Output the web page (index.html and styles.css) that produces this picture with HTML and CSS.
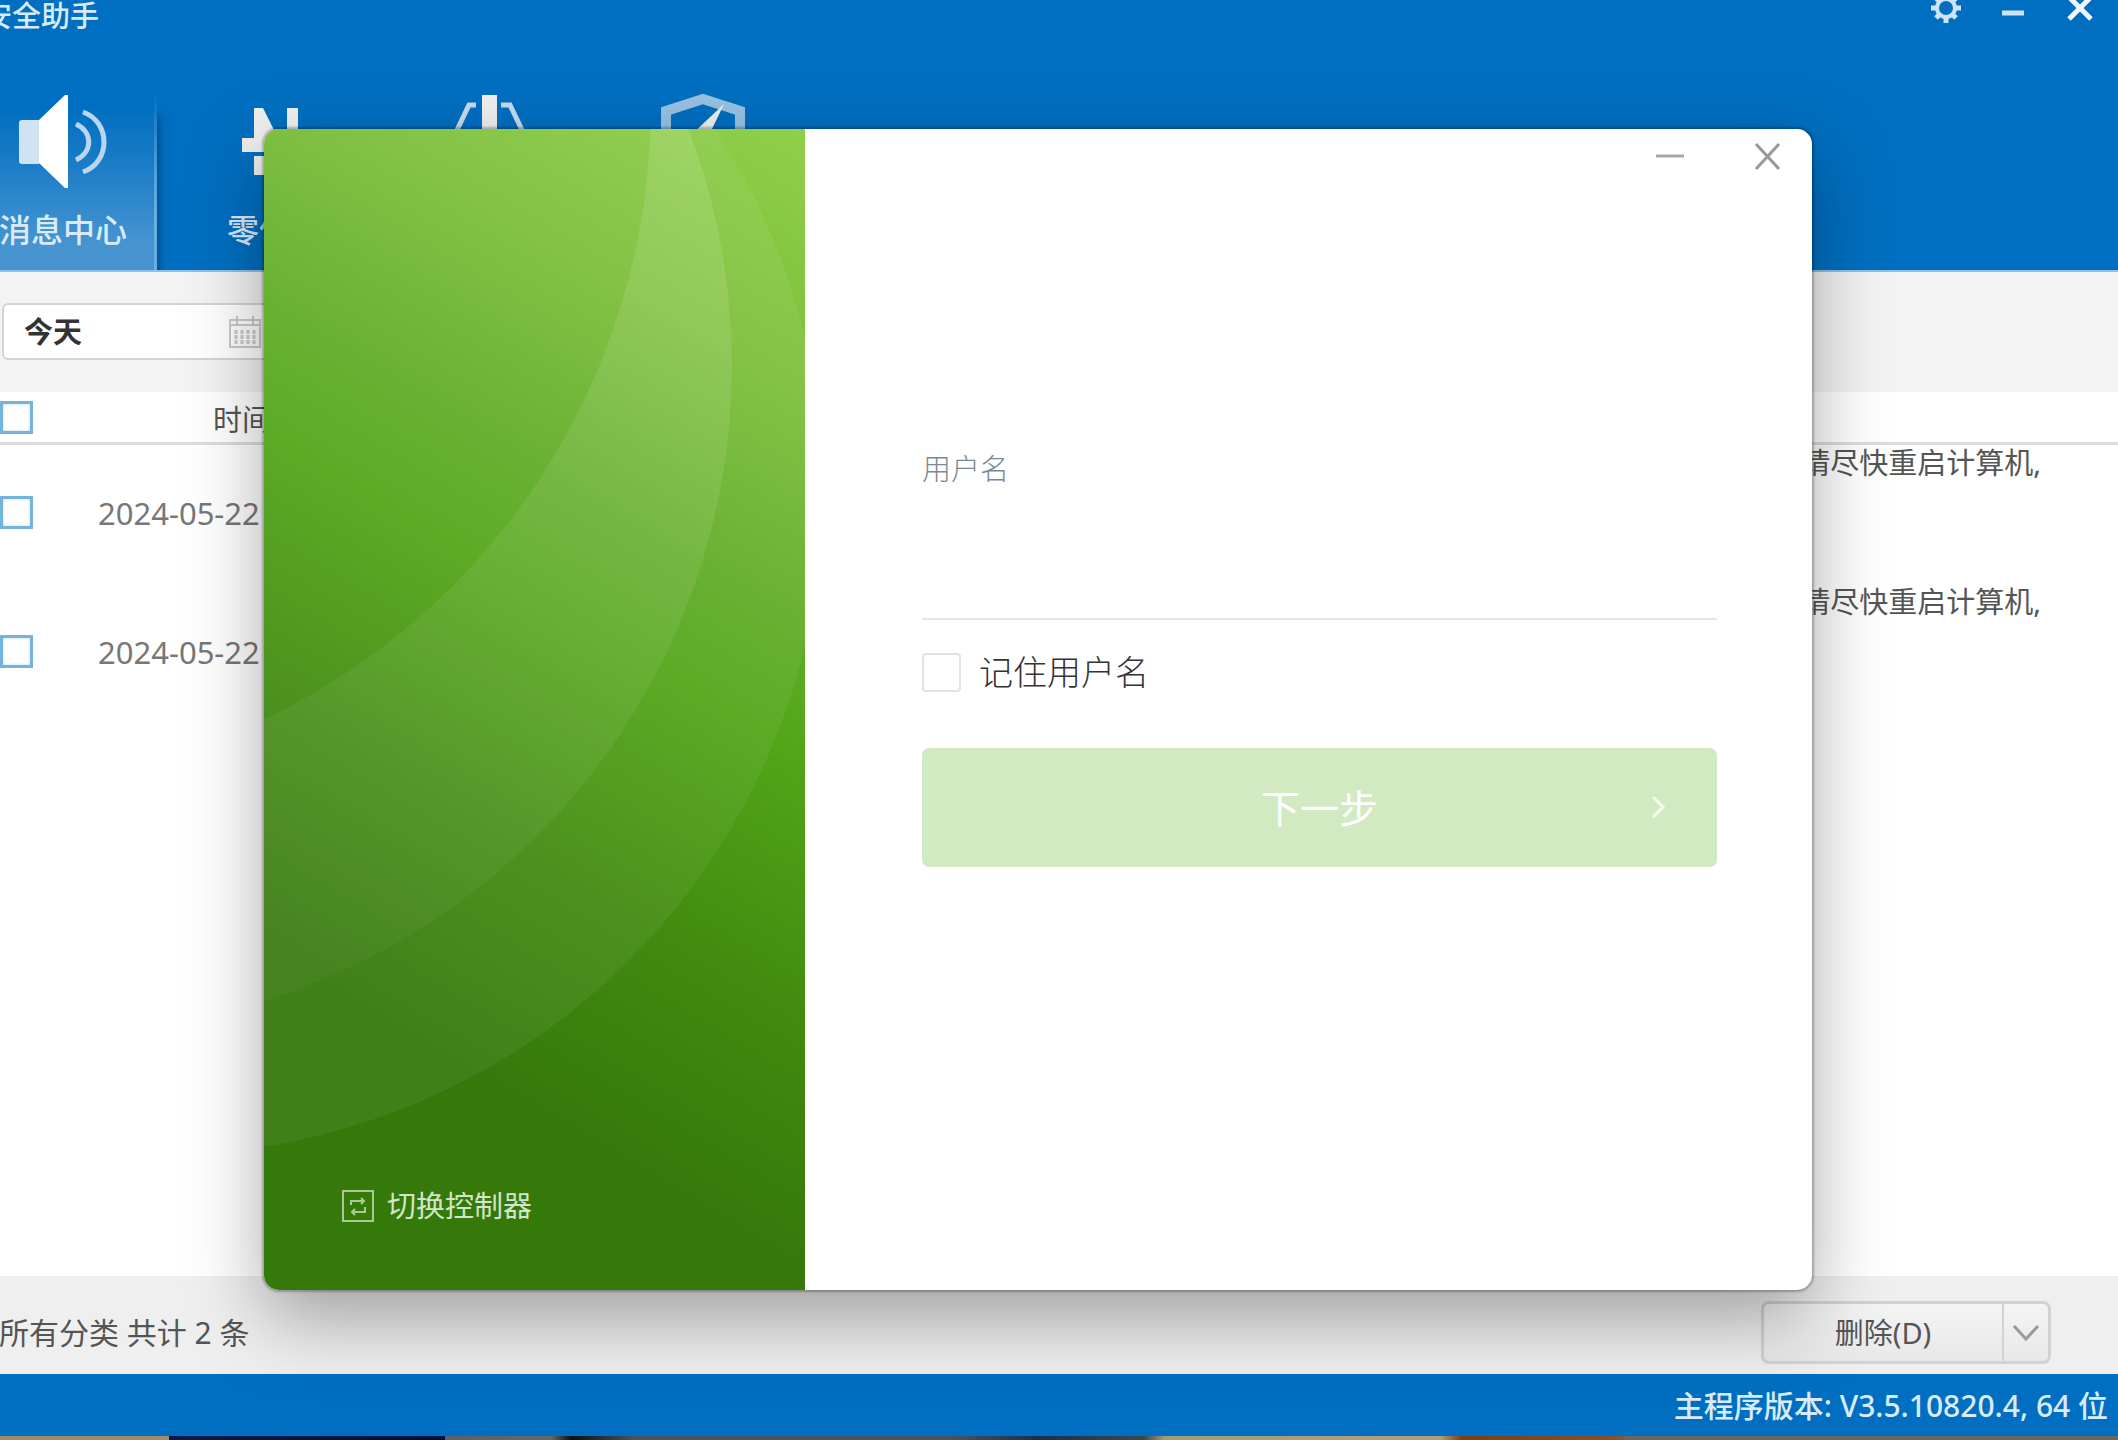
FILE: index.html
```html
<!DOCTYPE html>
<html lang="zh-CN">
<head>
<meta charset="utf-8">
<meta name="viewport" content="width=device-width, initial-scale=1">
<title>安全助手</title>
<link rel="stylesheet" href="styles.css">
</head>
<body>
<div class="desktop">
  <div class="app">
    <header class="app-header">
      <div class="title-bar">
        <span class="app-title">安全助手</span>
        <div class="title-actions">
          <button type="button" class="title-button">
            <svg width="34" height="32" viewBox="-17 -8 34 32" fill="none" stroke="#cfe5f5">
              <circle r="9" stroke-width="4"/>
              <path stroke-width="5" d="M0-15V-10M0 10V15M-15 0H-10M10 0H15M-10-10L-7-7M7 7L10 10M-10 10L-7 7M7-7L10-10"/>
            </svg>
          </button>
          <button type="button" class="title-button">
            <svg width="34" height="32" viewBox="-17 -8 34 32" stroke="#cfe5f5" stroke-width="5"><path d="M-11 5H11"/></svg>
          </button>
          <button type="button" class="title-button">
            <svg width="34" height="32" viewBox="-17 -8 34 32" stroke="#f2f8fd" stroke-width="5"><path d="M-11-11L11 11M11-11L-11 11"/></svg>
          </button>
        </div>
      </div>
      <nav class="nav">
        <button type="button" class="nav-item nav-item-active">
          <svg width="110" height="100" viewBox="7 90 110 100">
            <path d="M21 120H38V164H21Q18 164 18 161V123Q18 120 21 120Z" fill="#d0e3f3"/>
            <path d="M38 120L64 95H67V188H64L38 163Z" fill="#fff"/>
            <path d="M75 124C92 132 92 152 75 160M82 112C110 122 110 162 82 172" fill="none" stroke="#b9d6ee" stroke-width="5"/>
          </svg>
          <span>消息中心</span>
        </button>
        <button type="button" class="nav-item">
          <svg width="110" height="100" viewBox="220 90 110 100" fill="#f0f0f0">
            <path d="M254 108H263L278 138H309V152H242V138H254ZM287 108H298V138H287ZM254 156H264V175H254ZM280 156H298V175H289Z"/>
          </svg>
          <span>零信任</span>
        </button>
        <button type="button" class="nav-item">
          <svg width="110" height="100" viewBox="433 90 110 100">
            <rect x="482" y="95" width="15" height="60" fill="#f0f0f0"/>
            <path d="M476 105H469L457 130V160M501 105H510L522 130V160" fill="none" stroke="#c5dcee" stroke-width="5"/>
          </svg>
        </button>
        <button type="button" class="nav-item">
          <svg width="110" height="100" viewBox="646 90 110 100">
            <path d="M666 160V111L703 99L740 111V160" fill="none" stroke="#98c2e3" stroke-width="10"/>
            <path d="M724 104L712 129L703 142L690 136Z" fill="#f0f0f0"/>
          </svg>
        </button>
      </nav>
    </header>

    <div class="filter-bar">
      <label class="date-field">
        <input class="date-input" type="text" value="今天">
        <svg width="34" height="34" viewBox="0 0 34 34" fill="none" stroke="#cacaca" stroke-width="2">
          <rect x="2" y="5" width="30" height="27"/>
          <path d="M9 1V9M25 1V9M2 10H32"/>
          <path d="M8 15V29M14 15V29M20 15V29M26 15V29" stroke-width="3" stroke-dasharray="4 1"/>
        </svg>
      </label>
    </div>

    <div class="list">
      <table class="messages">
        <thead>
          <tr>
            <th class="col-check"><input class="tick" type="checkbox"></th>
            <th class="col-time">时间</th>
            <th class="col-text"></th>
          </tr>
        </thead>
        <tbody>
          <tr>
            <td class="col-check"><input class="tick" type="checkbox"></td>
            <td class="col-time">2024-05-22</td>
            <td class="col-text">请尽快重启计算机,</td>
          </tr>
          <tr>
            <td class="col-check"><input class="tick" type="checkbox"></td>
            <td class="col-time">2024-05-22</td>
            <td class="col-text">请尽快重启计算机,</td>
          </tr>
        </tbody>
      </table>
    </div>

    <footer class="app-footer">
      <span class="summary">所有分类 共计 2 条</span>
      <div class="split-button">
        <button type="button" class="split-main">删除(D)</button>
        <button type="button" class="split-more">
          <svg width="28" height="18" viewBox="0 0 28 18" fill="none" stroke="#9a9a9a" stroke-width="3"><path d="M2 2L14 15L26 2"/></svg>
        </button>
      </div>
    </footer>
    <div class="status-bar">主程序版本: V3.5.10820.4, 64 位</div>
  </div>
  <div class="wallpaper"></div>

  <section class="dialog">
    <aside class="brand">
      <svg class="brand-art" viewBox="0 0 540 1161" preserveAspectRatio="xMinYMin slice">
        <defs>
          <linearGradient id="sheen" gradientUnits="userSpaceOnUse" x1="460" y1="0" x2="0" y2="800">
            <stop offset="0" stop-color="#fff" stop-opacity=".13"/>
            <stop offset="1" stop-color="#fff" stop-opacity=".03"/>
          </linearGradient>
          <mask id="crescent">
            <circle cx="-197" cy="236" r="664" fill="#fff"/>
            <circle cx="-291" cy="-22" r="677" fill="#000"/>
          </mask>
        </defs>
        <circle cx="-104" cy="362" r="662" fill="#fff" fill-opacity=".06"/>
        <rect width="540" height="1161" fill="url(#sheen)" mask="url(#crescent)"/>
      </svg>
      <a class="switch-link" href="#">
        <svg width="32" height="32" viewBox="0 0 32 32" fill="none" stroke="#a9cb93" stroke-width="2">
          <rect x="1" y="1" width="30" height="30"/>
          <path d="M9 15V11H22M19 8L22 11L19 14M23 17V22H10M13 19L10 22L13 25"/>
        </svg>
        <span>切换控制器</span>
      </a>
    </aside>
    <div class="login">
      <div class="dialog-controls">
        <button type="button" class="control">
          <svg width="30" height="30" viewBox="0 0 30 30" stroke="#a8a8a8" stroke-width="3"><path d="M1 14H29"/></svg>
        </button>
        <button type="button" class="control">
          <svg width="30" height="30" viewBox="0 0 30 30" stroke="#999" stroke-width="3"><path d="M3 2L26 27M26 2L3 27"/></svg>
        </button>
      </div>
      <form class="form">
        <label class="field-label" for="username">用户名</label>
        <input class="field-input" id="username" type="text">
        <label class="remember"><input class="remember-box" type="checkbox">记住用户名</label>
        <button type="button" class="next">
          <span>下一步</span>
          <svg width="18" height="26" viewBox="0 0 18 26" fill="none" stroke="#f5fbf2" stroke-width="3"><path d="M4 2L14 12L4 22"/></svg>
        </button>
      </form>
    </div>
  </section>
</div>
</body>
</html>
```

FILE: styles.css
```css
* {
  box-sizing: border-box;
}

body {
  margin: 0;
  font-family: "Noto Sans", "Noto Sans CJK SC", sans-serif;
  font-size: 29px;
  line-height: 40px;
  color: #555;
}

button,
input {
  font: inherit;
  color: inherit;
  margin: 0;
}

button {
  display: flex;
  align-items: center;
  justify-content: center;
  padding: 0;
  border: 0;
  background: none;
}

svg {
  display: block;
  flex: none;
}

.desktop {
  position: relative;
  display: flex;
  flex-direction: column;
  min-height: 100vh;
  overflow: hidden;
}

/* The application window runs past the left edge of the desktop. */
.app {
  display: flex;
  flex: 1;
  flex-direction: column;
  margin-left: -33px;
  background: #fff;
}

.app-header {
  border-bottom: 2px solid #8fc0e8;
  background: #006fc1;
  color: #d9ebf8;
}

.title-bar {
  display: flex;
  align-items: center;
  justify-content: space-between;
  height: 32px;
  padding: 0 21px 0 16px;
}

.app-title {
  font-weight: 500;
}

.title-actions {
  display: flex;
  gap: 33px;
}

.nav {
  display: flex;
  gap: 23px;
  padding-top: 58px;
}

.nav-item {
  flex-direction: column;
  justify-content: flex-start;
  gap: 20px;
  width: 190px;
  height: 180px;
  font-size: 32px;
  font-weight: 500;
}

.nav-item-active {
  padding-left: 2px;
  background:
    linear-gradient(rgba(106, 175, 224, 0), #6aafe0 70%) right / 3px 100% no-repeat,
    linear-gradient(#006fc1 10%, #1b7dc7 42%, #4694d0 85%);
  box-shadow: 8px 20px 8px -6px rgba(0, 40, 80, .5);
  clip-path: inset(0 -14px 0 0);
}

.filter-bar {
  display: flex;
  padding: 31px 35px 32px;
  background: #f3f3f3;
}

.date-field {
  display: flex;
  align-items: center;
  width: 320px;
  height: 57px;
  padding-left: 20px;
  border: 2px solid #d4d4d4;
  border-radius: 6px;
  background: #fff;
}

.date-input {
  width: 204px;
  padding: 0;
  border: 0;
  background: none;
  font-weight: 700;
  color: #333;
}

.list {
  flex: 1;
}

.messages {
  width: 100%;
  border-spacing: 0;
  table-layout: fixed;
}

.messages th,
.messages td {
  padding: 0;
  font-weight: 400;
}

.messages th {
  height: 53px;
  border-bottom: 3px solid #dcdcdc;
}

.messages td {
  height: 139px;
  padding-bottom: 4px;
}

.messages .col-check {
  width: 100px;
  padding-left: 33px;
}

.col-time {
  width: 350px;
}

.messages th.col-time {
  padding-top: 6px;
}

.messages td.col-time {
  padding-left: 31px;
  font-size: 31px;
  color: #777;
}

.messages .col-text {
  padding-right: 77px;
  line-height: 36px;
  text-align: right;
  vertical-align: top;
}

.tick {
  display: block;
  appearance: none;
  width: 33px;
  height: 33px;
  border: 3px solid #74b4db;
  background: #fff;
  box-shadow: inset 0 0 3px #b9d9ed;
}

.app-footer {
  display: flex;
  align-items: flex-start;
  justify-content: space-between;
  height: 98px;
  padding: 25px 67px 0 32px;
  background: #efefef;
}

.summary {
  padding-top: 12px;
  font-size: 30px;
}

.split-button {
  display: flex;
  width: 290px;
  height: 63px;
  border: 3px solid #d2d2d2;
  border-radius: 8px;
  background: linear-gradient(#f4f4f4, #e8e8e8);
}

.split-main {
  flex: 1;
  border-right: 2px solid #d2d2d2;
}

.split-more {
  width: 44px;
}

.status-bar {
  height: 62px;
  padding: 12px 10px 10px;
  background: #006fc1;
  color: #d9ebf8;
  font-size: 30px;
  font-weight: 500;
  text-align: right;
}

/* A sliver of the desktop picture below the window. */
.wallpaper {
  height: 4px;
  background: linear-gradient(90deg, #a08c6c 8%, #0a1a48 8%, #000f3c 21%, #5c6068 21%, #686868 26%, #0c1014 27%, #4a5260 30%, #4a5260 45%, #1a3048 49%, #3c4850 54%, #a69c72 55%, #b0a078 68%, #7c4014 69%, #84502c 76%, #6b665e 77%);
}

.dialog {
  position: absolute;
  inset: 129px 306px 150px 264px;
  display: flex;
  border-radius: 15px;
  background: #fff;
  box-shadow: 0 0 2px 2px rgba(0, 0, 0, .24), 0 28px 76px rgba(0, 0, 0, .34);
}

.brand {
  position: relative;
  display: flex;
  flex-direction: column;
  justify-content: flex-end;
  width: 541px;
  padding: 0 78px 64px;
  overflow: hidden;
  border-radius: 15px 0 0 15px;
  background: linear-gradient(211deg, #90cf49, #7cbf3a 18%, #62ae29 32%, #52a618 42%, #418b10 60%, #35790b 77%);
}

.brand-art {
  position: absolute;
  inset: 0;
  width: 100%;
  height: 100%;
}

.switch-link {
  position: relative;
  display: flex;
  align-items: center;
  gap: 13px;
  color: #d3e5c8;
  text-decoration: none;
}

.login {
  flex: 1;
}

.dialog-controls {
  display: flex;
  justify-content: flex-end;
  gap: 54px;
  padding: 6px 22px 0;
}

.control {
  width: 44px;
  height: 44px;
}

.form {
  display: flex;
  flex-direction: column;
  padding: 270px 95px 0 117px;
}

.field-label {
  font-weight: 300;
  color: #7d8895;
}

.field-input {
  height: 131px;
  padding: 0;
  border: 0;
  border-bottom: 2px solid #e6e6e6;
  background: none;
  color: #333;
}

.remember {
  display: flex;
  align-items: center;
  gap: 18px;
  margin-top: 32px;
  font-size: 34px;
  font-weight: 300;
  color: #333;
}

.remember-box {
  appearance: none;
  width: 39px;
  height: 39px;
  border: 2px solid #e2e2e2;
  border-radius: 4px;
  background: #fff;
}

.next {
  display: grid;
  grid-template-columns: 1fr auto 1fr;
  height: 119px;
  margin-top: 56px;
  padding: 0 50px;
  border-radius: 7px;
  background: #d1eac2;
  color: #fff;
  font-size: 39px;
}

.next span {
  grid-column: 2;
}

.next svg {
  justify-self: end;
}
```
